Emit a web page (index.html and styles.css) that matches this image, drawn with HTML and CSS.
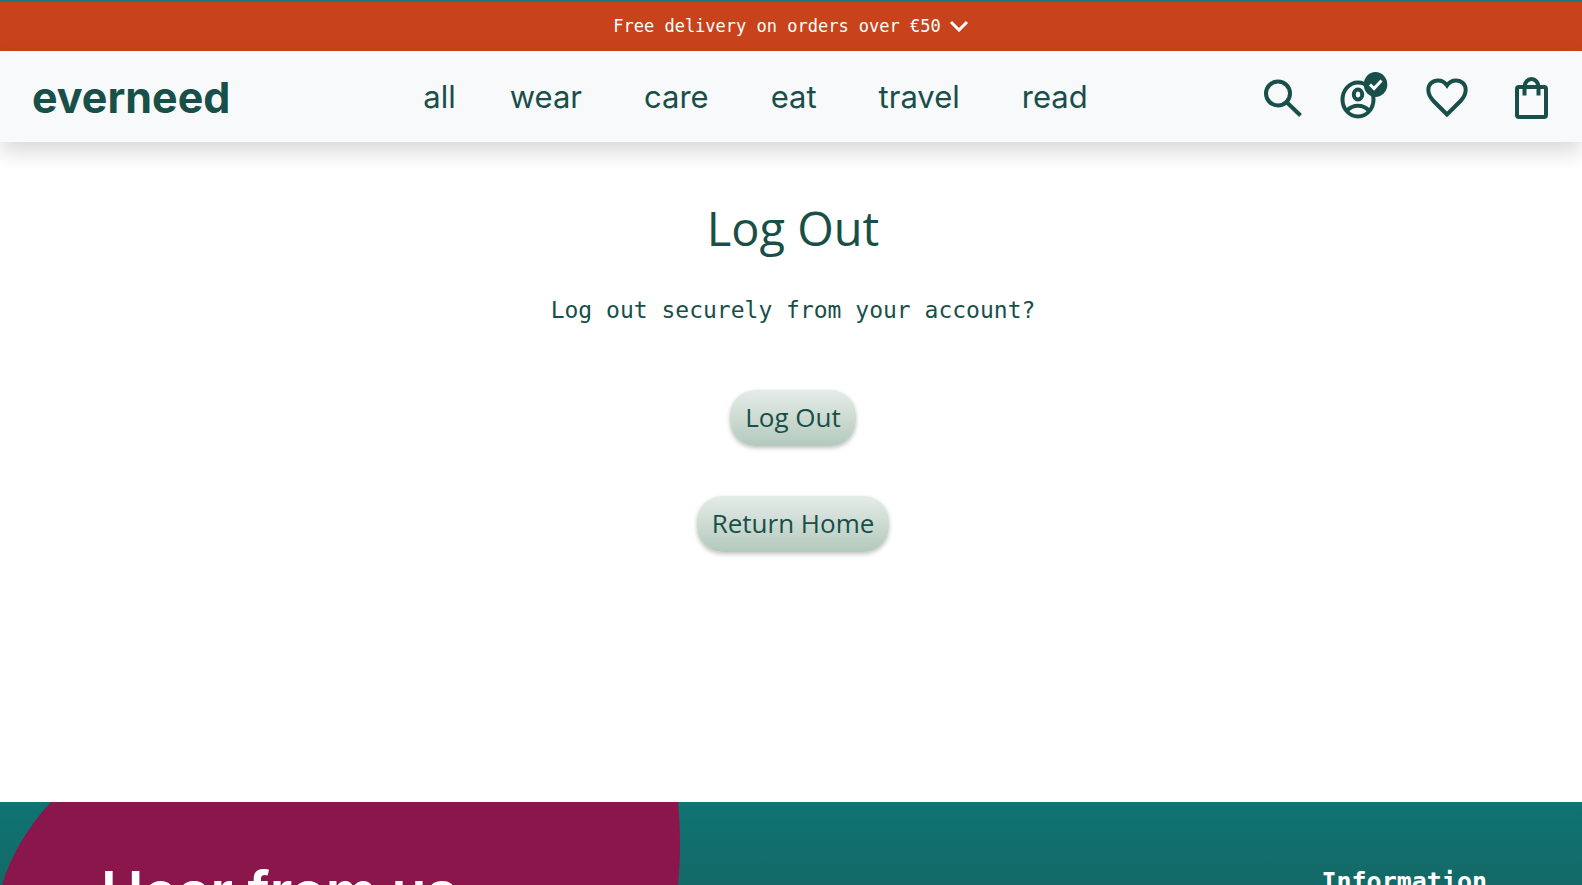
FILE: index.html
```html
<!DOCTYPE html>
<html lang="en">
<head>
<meta charset="utf-8">
<meta name="viewport" content="width=device-width, initial-scale=1">
<title>everneed - Log Out</title>
<link rel="stylesheet" href="styles.css">
</head>
<body>
<button class="banner" type="button">
  <span>Free delivery on orders over €50</span>
  <svg class="chevron" viewBox="0 0 20 12" aria-hidden="true"><path d="M2 2l8 8 8-8"/></svg>
</button>
<header class="header">
  <a class="logo" href="#">everneed</a>
  <nav class="nav" aria-label="Categories">
    <a class="nav-all" href="#">all</a>
    <a href="#">wear</a>
    <a href="#">care</a>
    <a href="#">eat</a>
    <a href="#">travel</a>
    <a href="#">read</a>
  </nav>
  <div class="tools">
    <a href="#" aria-label="Search"><svg class="icon" viewBox="0 0 48 48"><circle cx="23" cy="20.500" r="12"/><path d="M31.500 29l14 13.500"/></svg></a>
    <a href="#" aria-label="Account"><svg class="icon" viewBox="0 0 48 48"><ellipse cx="19" cy="26.500" rx="15.500" ry="17"/><ellipse cx="19" cy="21.500" rx="4.200" ry="5"/><path d="M8 37.500c6-6.500 16-6.500 22 0"/><ellipse class="solid" cx="36.500" cy="11.500" rx="11.800" ry="12.500"/><path class="tick" d="M31 11.500l4 4 7.500-8"/></svg></a>
    <a href="#" aria-label="Wishlist"><svg class="icon" viewBox="0 0 48 48"><path d="M24 41.500L10.500 28C6.500 23.900 5.300 20.700 5.300 16.800 5.300 11.200 9.600 7.500 15 7.500c3.600 0 6.900 1.900 9 5 2.100-3.100 5.400-5 9-5 5.400 0 9.700 3.700 9.700 9.300 0 3.900-1.200 7.100-5.200 11.200z"/></svg></a>
    <a href="#" aria-label="Bag"><svg class="icon" viewBox="0 0 48 48"><rect x="10" y="14" width="29" height="30" rx="2"/><path d="M17.500 22.500v-8.500a7 8 0 0 1 14 0v8.500"/></svg></a>
  </div>
</header>
<main class="main">
  <h1>Log Out</h1>
  <p>Log out securely from your account?</p>
  <form class="actions">
    <button class="pill" type="button">Log Out</button>
    <a class="pill" href="#">Return Home</a>
  </form>
</main>
<footer class="footer">
  <svg class="blob" viewBox="0 0 700 400" aria-hidden="true"><path d="M51 0C24 29 8 60 0 90C-60 270 60 400 340 400C560 400 680 220 680 44Q680 20 678 0Z"/></svg>
  <h2>Hear from us</h2>
  <h3>Information</h3>
</footer>
</body>
</html>
```
FILE: styles.css
```css
:root {
  --green: #184f49;
  --sans: Inter, "Open Sans", sans-serif;
  --mono: "DejaVu Sans Mono", monospace;
}
* { box-sizing: border-box; }
body {
  margin: 0;
  height: 100vh;
  display: flex;
  flex-direction: column;
  overflow: hidden;
  background: #fff;
  color: var(--green);
  font-family: var(--sans);
}
a { color: inherit; text-decoration: none; }
h1, h2, h3, p { margin: 0; }
.banner {
  flex: none;
  display: flex;
  align-items: center;
  justify-content: center;
  gap: 8px;
  padding: 12px 0 13px;
  border: 0;
  border-top: 2px solid #1f7a80;
  background: #c8431b;
  color: #fff;
  font-family: var(--mono);
  font-size: 17px;
  line-height: 24px;
}
.chevron {
  width: 20px;
  height: 12px;
  fill: none;
  stroke: #fff;
  stroke-width: 3;
}
.header {
  flex: none;
  position: relative;
  display: grid;
  grid-template-columns: 1fr auto 1fr;
  align-items: center;
  padding: 0 27px 0 32px;
  min-height: 91px;
  background: #f8f9fb;
  box-shadow: 0 10px 20px rgba(0, 0, 0, .15);
}
.logo {
  font-size: 43px;
  font-weight: 700;
  line-height: 56px;
}
.nav {
  display: flex;
  gap: 62px;
  margin-right: 76px;
  font-size: 31px;
  line-height: 40px;
}
.nav-all { margin-right: -8px; }
.tools {
  display: flex;
  justify-content: flex-end;
  gap: 36px;
}
.icon {
  display: block;
  width: 48px;
  height: 48px;
  overflow: visible;
  fill: none;
  stroke: var(--green);
  stroke-width: 4;
}
.icon .solid { fill: var(--green); stroke: none; }
.icon .tick { stroke: #fff; stroke-width: 3; }
.main {
  flex: none;
  display: flex;
  flex-direction: column;
  align-items: center;
  min-height: 660px;
  padding: 54px 16px 54px 20px;
}
h1 {
  font-family: "Open Sans", sans-serif;
  font-size: 47px;
  font-weight: 500;
  line-height: 64px;
}
.main p {
  margin-top: 34px;
  font-family: var(--mono);
  font-size: 23px;
  line-height: 32px;
}
.actions {
  display: flex;
  flex-direction: column;
  align-items: center;
  gap: 50px;
  margin-top: 64px;
}
.pill {
  padding: 9px 15px 11px;
  border: 0;
  border-radius: 25px;
  background: linear-gradient(#e4ece8, #cddbd2 50%, #b3c9be);
  box-shadow: 0 2px 4px rgba(0, 0, 0, .25);
  color: var(--green);
  font-family: "Open Sans", sans-serif;
  font-size: 26px;
  line-height: 36px;
}
.footer {
  flex: 1;
  position: relative;
  display: flex;
  justify-content: space-between;
  align-items: flex-start;
  padding: 56px 95px 0 101px;
  overflow: hidden;
  background: linear-gradient(#0f7473, #136967 83px);
  color: #fff;
}
.blob {
  position: absolute;
  top: 0;
  left: 0;
  width: 700px;
  height: 400px;
  fill: #8b164b;
}
h2 {
  position: relative;
  font-size: 57px;
  font-weight: 600;
  line-height: 68px;
}
h3 {
  padding-top: 8px;
  font-family: var(--mono);
  font-size: 25px;
  font-weight: 700;
  line-height: 32px;
}
```
